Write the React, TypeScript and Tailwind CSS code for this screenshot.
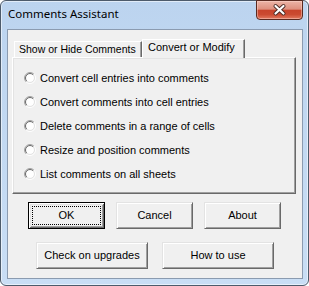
import React from "react";

const ui = "font-['Liberation_Sans',Arial,sans-serif] text-[11px] leading-[13px] text-black";

function Radio({ label }: { label: string }) {
  return (
    <div className="flex h-[24px] items-center gap-[4px]">
      <svg width="12" height="12" viewBox="0 0 12 12" className="shrink-0">
        <circle cx="6" cy="6" r="4" fill="#ffffff" />
        <path d="M2.111 9.889 A5.5 5.5 0 0 1 9.889 2.111" stroke="#a0a0a0" strokeWidth="1" fill="none" />
        <path d="M9.889 2.111 A5.5 5.5 0 0 1 2.111 9.889" stroke="#ffffff" strokeWidth="1" fill="none" />
        <path d="M2.818 9.182 A4.5 4.5 0 0 1 9.182 2.818" stroke="#696969" strokeWidth="1" fill="none" />
        <path d="M9.182 2.818 A4.5 4.5 0 0 1 2.818 9.182" stroke="#e3e3e3" strokeWidth="1" fill="none" />
      </svg>
      <span className={ui}>{label}</span>
    </div>
  );
}

function Btn({ label, w, isDefault }: { label: string; w: string; isDefault?: boolean }) {
  if (isDefault) {
    return (
      <div
        className={`relative flex h-[27px] ${w} items-center justify-center border border-black bg-[#f0f0f0] shadow-[inset_1px_1px_0_#ffffff,inset_-1px_-1px_0_#696969,inset_2px_2px_0_#e3e3e3,inset_-2px_-2px_0_#a0a0a0]`}
      >
        <span className={ui}>{label}</span>
        <span className="pointer-events-none absolute inset-[3px] border border-dotted border-black" />
      </div>
    );
  }
  return (
    <div
      className={`flex h-[27px] ${w} items-center justify-center border border-t-[#e3e3e3] border-l-[#e3e3e3] border-r-[#696969] border-b-[#696969] bg-[#f0f0f0] shadow-[inset_1px_1px_0_#ffffff,inset_-1px_-1px_0_#a0a0a0]`}
    >
      <span className={ui}>{label}</span>
    </div>
  );
}

export default function App() {
  return (
    <div className="h-[286px] w-[309px] bg-white">
      <div className="flex h-[286px] w-[309px] flex-col rounded-[6px] border border-[#4d5b6b] bg-gradient-to-b from-[#bcd4ef] to-[#c9def5] shadow-[inset_0_0_0_1px_rgba(255,255,255,0.55)]">
        {/* title bar */}
        <div className="flex h-[28px] items-start justify-between">
          <div className="pl-[7px] pt-[5px] font-['Noto_Sans','Segoe_UI',sans-serif] text-[11.5px] leading-[16px] text-black">
            Comments Assistant
          </div>
          <div className="-mt-[1px] mr-[5px] h-[20px] w-[47px] rounded-b-[4px] border border-[#5a2a20] bg-[linear-gradient(to_bottom,#ecb4a7_0%,#de907e_45%,#c8442b_52%,#cb4b31_75%,#e27a60_100%)] shadow-[inset_0_0_0_1px_rgba(255,220,210,0.45)]">
            <svg width="45" height="18" viewBox="0 0 45 18">
              <path d="M18.5 5 L26.5 12.5 M26.5 5 L18.5 12.5" stroke="#4a2a24" strokeWidth="4" strokeLinecap="round" fill="none" />
              <path d="M18.5 5 L26.5 12.5 M26.5 5 L18.5 12.5" stroke="#ffffff" strokeWidth="2.2" strokeLinecap="round" fill="none" />
            </svg>
          </div>
        </div>

        {/* client area */}
        <div className="ml-[6px] mr-[5px] flex h-[250px] flex-col border border-[#8b9bb0] bg-[#f0f0f0]">
          {/* tab control */}
          <div className="ml-[4px] mt-[9px] w-[284px]">
            <div className="flex h-[18px] items-end pl-[2px]">
              <div className="flex h-[16px] w-[128px] items-center border-l border-t border-r border-l-white border-t-white border-r-[#696969] pl-[4px] shadow-[inset_-1px_0_0_#a0a0a0]">
                <span className="whitespace-nowrap font-['Liberation_Sans',Arial,sans-serif] text-[10.5px] leading-[13px] text-black">
                  Show or Hide Comments
                </span>
              </div>
              <div className="relative z-10 -mb-[1px] flex h-[19px] w-[103px] items-start border-l border-t border-r border-l-white border-t-white border-r-[#696969] bg-[#f0f0f0] pl-[5px] pt-[1px] shadow-[inset_-1px_0_0_#a0a0a0]">
                <span className={`${ui} whitespace-nowrap`}>Convert or Modify</span>
              </div>
            </div>
            <div className="flex h-[137px] flex-col border border-l-white border-t-white border-r-[#696969] border-b-[#696969] pl-[11px] pt-[8px] shadow-[inset_-1px_-1px_0_#a0a0a0,inset_1px_1px_0_#e3e3e3]">
              <Radio label="Convert cell entries into comments" />
              <Radio label="Convert comments into cell entries" />
              <Radio label="Delete comments in a range of cells" />
              <Radio label="Resize and position comments" />
              <Radio label="List comments on all sheets" />
            </div>
          </div>

          {/* buttons */}
          <div className="ml-[20px] mt-[8px] flex gap-[11px]">
            <Btn label="OK" w="w-[77px]" isDefault />
            <Btn label="Cancel" w="w-[77px]" />
            <Btn label="About" w="w-[77px]" />
          </div>
          <div className="ml-[28px] mt-[13px] flex gap-[14px]">
            <Btn label="Check on upgrades" w="w-[112px]" />
            <Btn label="How to use" w="w-[112px]" />
          </div>
        </div>
      </div>
    </div>
  );
}
